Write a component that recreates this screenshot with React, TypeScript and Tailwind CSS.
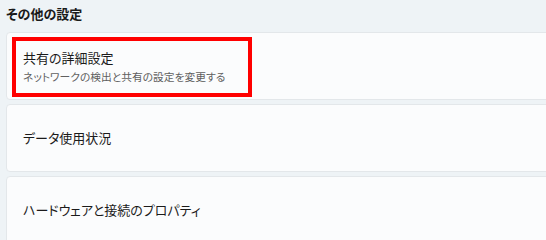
const font = "font-['Noto_Sans_CJK_JP','Noto_Sans',sans-serif] [font-feature-settings:'palt']";

type Item = { title: string; desc?: string; highlight?: boolean };

const items: Item[] = [
  { title: "共有の詳細設定", desc: "ネットワークの検出と共有の設定を変更する", highlight: true },
  { title: "データ使用状況" },
  { title: "ハードウェアと接続のプロパティ" },
];

function Card({ item }: { item: Item }) {
  return (
    <div className="relative h-[68px] shrink-0 rounded-[4px] border border-[#e3e7ea] bg-[#fbfcfd] px-4 flex flex-col justify-center">
      <div className="text-[13px] leading-[18px] text-[#1b1b1b]">{item.title}</div>
      {item.desc && (
        <div className="mt-[2px] text-[10.75px] leading-[15px] text-[#606060]">{item.desc}</div>
      )}
      {item.highlight && (
        <div className="absolute left-[5px] top-[4px] h-[60px] w-[240px] border-4 border-[#ff0000]" />
      )}
    </div>
  );
}

export default function App() {
  return (
    <div className={`${font} h-[240px] w-[546px] overflow-hidden bg-[#eef3f6]`}>
      <div className="pl-[6px] -mr-[30px]">
        <h2 className="pt-[4px] h-[32px] text-[13px] leading-[20px] font-bold text-[#1a1a1a]">
          その他の設定
        </h2>
        <div className="flex flex-col gap-[4px]">
          {items.map((it, i) => (
            <Card item={it} key={i} />
          ))}
        </div>
      </div>
    </div>
  );
}
